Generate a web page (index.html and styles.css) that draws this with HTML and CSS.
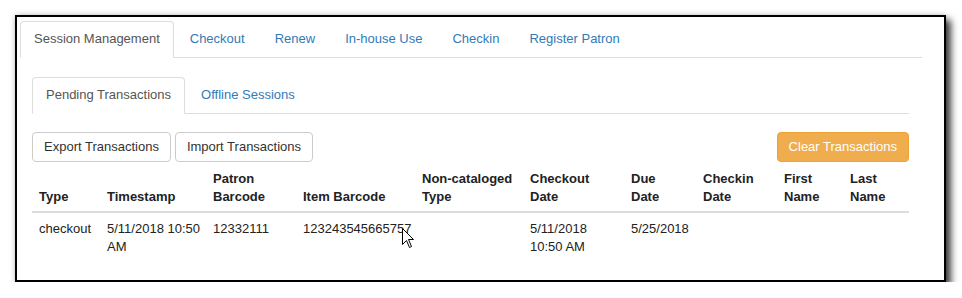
FILE: index.html
```html
<!DOCTYPE html>
<html lang="en">
<head>
  <meta charset="UTF-8">
  <title>Offline Circulation</title>
  <link rel="stylesheet" href="styles.css">
</head>
<body>
  <div class="frame">
    <ul class="tabs">
      <li class="active"><a href="#">Session Management</a></li>
      <li><a href="#">Checkout</a></li>
      <li><a href="#">Renew</a></li>
      <li><a href="#">In-house Use</a></li>
      <li><a href="#">Checkin</a></li>
      <li><a href="#">Register Patron</a></li>
    </ul>

    <div class="pane">
      <ul class="tabs">
        <li class="active"><a href="#">Pending Transactions</a></li>
        <li><a href="#">Offline Sessions</a></li>
      </ul>

      <div class="toolbar">
        <button class="btn">Export Transactions</button>
        <button class="btn">Import Transactions</button>
        <button class="btn btn-warning">Clear Transactions</button>
      </div>

      <table class="pending">
        <thead>
          <tr>
            <th>Type</th>
            <th>Timestamp</th>
            <th>Patron<br>Barcode</th>
            <th>Item Barcode</th>
            <th>Non-cataloged<br>Type</th>
            <th>Checkout<br>Date</th>
            <th>Due<br>Date</th>
            <th>Checkin<br>Date</th>
            <th>First<br>Name</th>
            <th>Last<br>Name</th>
          </tr>
        </thead>
        <tbody>
          <tr>
            <td>checkout</td>
            <td>5/11/2018 10:50<br>AM</td>
            <td>12332111</td>
            <td>123243545665757</td>
            <td></td>
            <td>5/11/2018<br>10:50 AM</td>
            <td>5/25/2018</td>
            <td></td>
            <td></td>
            <td></td>
          </tr>
        </tbody>
      </table>
    </div>

    <svg class="cursor" width="13" height="21" viewBox="0 0 13 21">
      <path d="M0.5 0.5 L0.5 16.5 L4.5 12.5 L7.5 19.5 L9.5 18.5 L6.5 11.5 L11.5 11.5 Z" fill="#fff" stroke="#000" stroke-width="1"/>
    </svg>
  </div>
</body>
</html>
```

FILE: styles.css
```css
body { margin: 0; background: #fff; font-family: "Liberation Sans", Arial, sans-serif; font-size: 13px; color: #333; }

.frame { position: relative; box-sizing: border-box; width: 931px; height: 267px; margin: 15px 0 0 15px; padding: 4px 22px 0 3px; border: 2px solid #000; background: #fff; box-shadow: 5px 5px 7px rgba(0, 0, 0, 0.75), 0 0 6px rgba(0, 0, 0, 0.2); }

.tabs { display: flex; list-style: none; margin: 0; padding: 0; border-bottom: 1px solid #ddd; }
.tabs li { margin: 0 2px -1px 0; }
.tabs a { display: block; padding: 7px 13px 9px; line-height: 19px; border: 1px solid transparent; border-radius: 4px 4px 0 0; color: #337ab7; text-decoration: none; }
.tabs .active a { color: #555; background: #fff; border-color: #ddd #ddd transparent; }

.pane { padding: 19px 13px 0 12px; }

.toolbar { display: flex; gap: 4px; margin-top: 18px; }
.btn { height: 30px; padding: 4px 11px 6px; line-height: 18px; font: inherit; color: #333; background: #fff; border: 1px solid #ccc; border-radius: 4px; }
.btn-warning { margin-left: auto; color: #fff; background: #f0ad4e; border-color: #eea236; }

.pending { width: 100%; margin-top: 1px; border-collapse: collapse; table-layout: fixed; color: #222; }
.pending th, .pending td { box-sizing: border-box; padding: 7px 4px 5px 7px; line-height: 18px; text-align: left; white-space: nowrap; }
.pending th { vertical-align: bottom; border-bottom: 2px solid #ddd; }
.pending td { vertical-align: top; padding-top: 7px; }
.pending th:nth-child(1) { width: 68px; }
.pending th:nth-child(2) { width: 106px; }
.pending th:nth-child(3) { width: 90px; }
.pending th:nth-child(4) { width: 119px; }
.pending th:nth-child(5) { width: 108px; }
.pending th:nth-child(6) { width: 101px; }
.pending th:nth-child(7) { width: 72px; }
.pending th:nth-child(8) { width: 81px; }
.pending th:nth-child(9) { width: 66px; }
.pending th:nth-child(10) { width: 66px; }

.cursor { position: absolute; left: 385px; top: 211px; }
```
